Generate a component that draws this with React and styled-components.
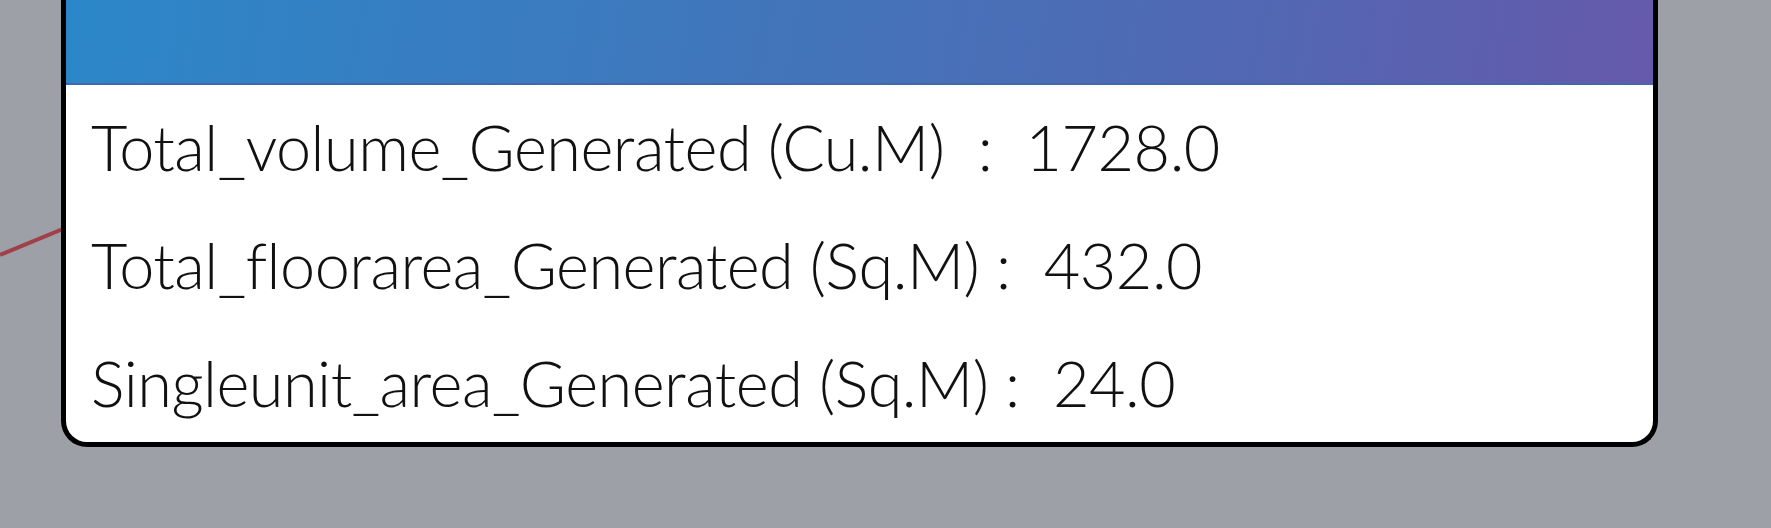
import styled, { createGlobalStyle } from "styled-components";

const GlobalStyle = createGlobalStyle`
  html, body {
    margin: 0;
    padding: 0;
    background: #9da0a7;
    overflow: hidden;
  }
`;

const rows = [
  { label: "Total_volume_Generated (Cu.M)  :  ", value: "1728.0" },
  { label: "Total_floorarea_Generated (Sq.M) :  ", value: "432.0" },
  { label: "Singleunit_area_Generated (Sq.M) :  ", value: "24.0" },
];

export default function App() {
  return (
    <>
      <GlobalStyle />
      <Canvas>
        <Wire width="80" height="60" viewBox="0 0 80 60">
          <line x1="0" y1="31" x2="75" y2="0" stroke="#a0404a" strokeWidth="4" />
        </Wire>
        <Panel>
          <Header />
          <Body>
            {rows.map((row) => (
              <Row key={row.label}>
                {row.label}
                {row.value}
              </Row>
            ))}
          </Body>
        </Panel>
      </Canvas>
    </>
  );
}

const Canvas = styled.div`
  position: relative;
  width: 1771px;
  height: 528px;
  padding-left: 61px;
  box-sizing: border-box;
`;

const Wire = styled.svg`
  position: absolute;
  left: 0;
  top: 224px;
`;

const Panel = styled.div`
  position: relative;
  width: 1597px;
  box-sizing: border-box;
  background: #ffffff;
  border: 5px solid #000000;
  border-top: none;
  border-radius: 0 0 26px 26px;
  overflow: hidden;
`;

const Header = styled.div`
  height: 85px;
  background: linear-gradient(100deg, #2b87c9 0%, #4275ba 45%, #5267b3 75%, #6659ab 100%);
  border-bottom: 2px solid #4267ad;
  box-sizing: border-box;
`;

const Body = styled.div`
  padding: 3px 0 0 25px;
`;

const Row = styled.div`
  font-family: "Lato", "Open Sans", sans-serif;
  font-size: 63px;
  font-weight: 300;
  letter-spacing: -0.5px;
  line-height: 118px;
  color: #111111;
  white-space: pre;
`;
